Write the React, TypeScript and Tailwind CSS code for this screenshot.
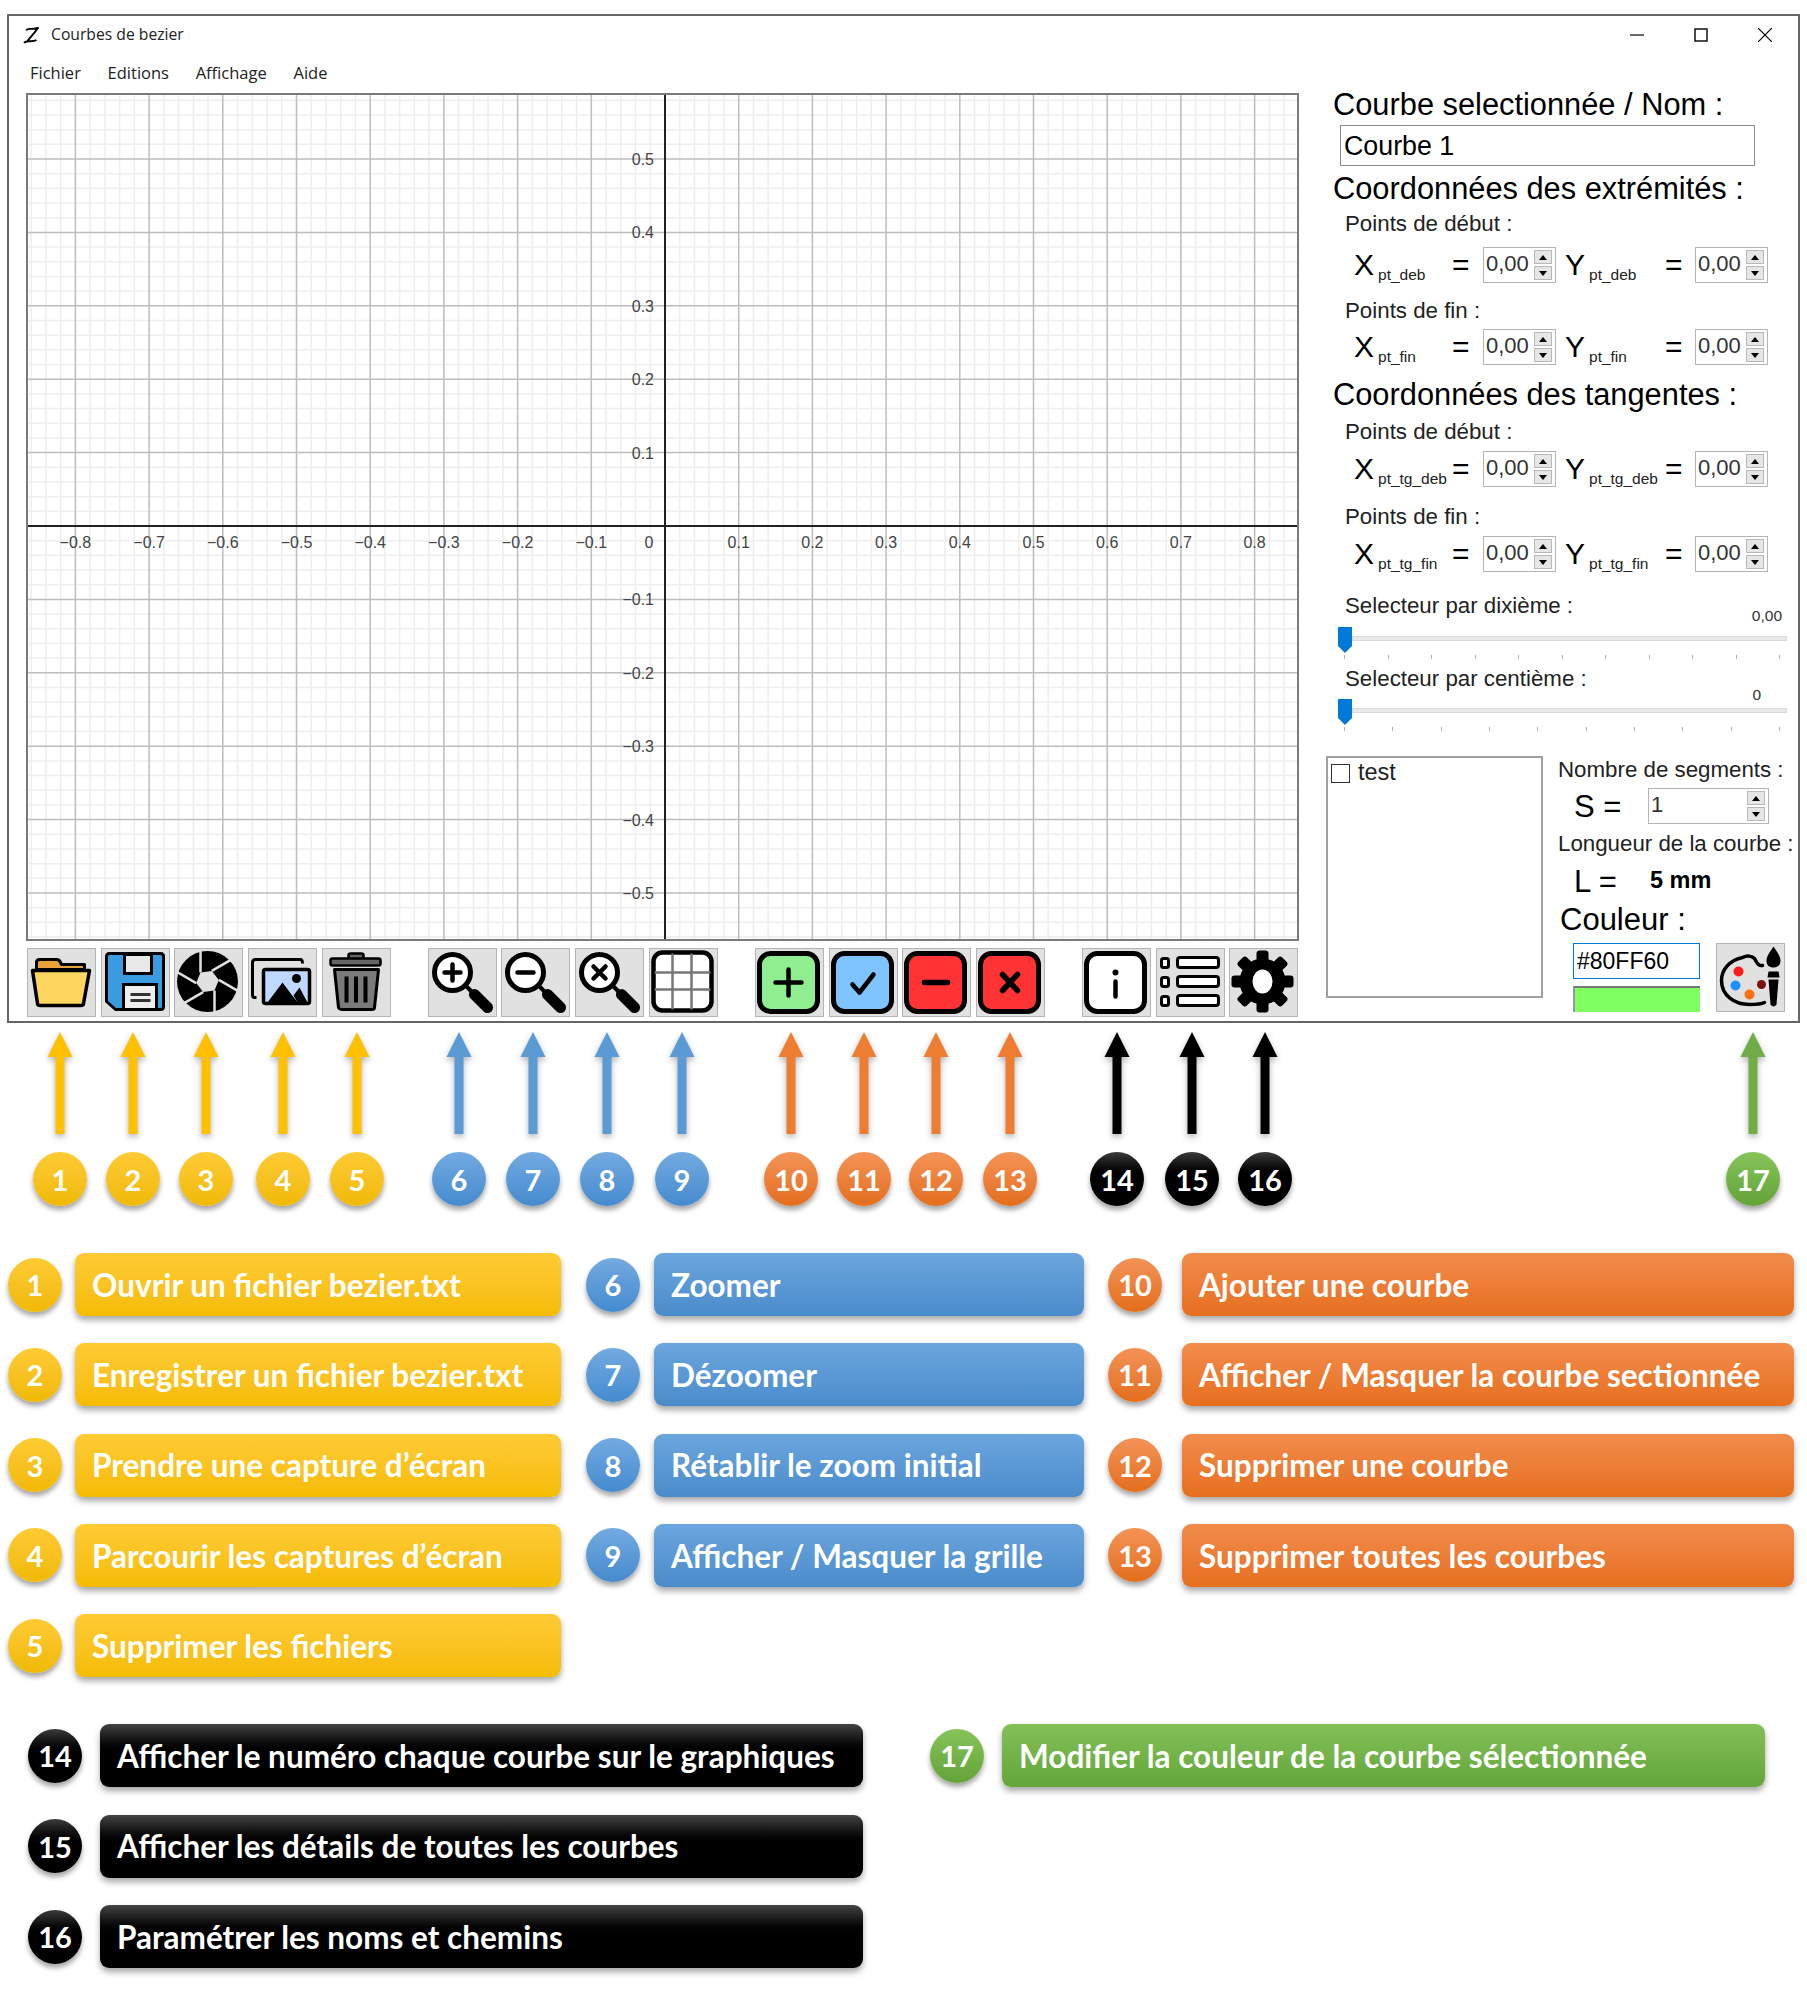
import React from "react";

const MAJOR_X = 73.7;
const MAJOR_Y = 73.4;
const AXIS_X = 637;
const AXIS_Y = 431;
const GRAPH_W = 1269;
const GRAPH_H = 844;

function range(from: number, to: number) {
  const out: number[] = [];
  for (let i = from; i <= to; i++) out.push(i);
  return out;
}

function Graph() {
  const xs = range(-50, 50).map((k) => ({ k, x: AXIS_X + (k * MAJOR_X) / 5 })).filter((p) => p.x > 0 && p.x < GRAPH_W);
  const ys = range(-35, 35).map((k) => ({ k, y: AXIS_Y + (k * MAJOR_Y) / 5 })).filter((p) => p.y > 0 && p.y < GRAPH_H);
  const fmt = (n: number) => (n < 0 ? "\u2212" : "") + "0." + Math.abs(n);
  return (
    <div className="w-[1273px] h-[848px] border-2 border-[#7a7a7a] bg-white">
      <svg width={GRAPH_W} height={GRAPH_H} className="block" fontFamily="'Liberation Sans', sans-serif">
        {xs.filter((p) => p.k % 5 !== 0).map((p) => (
          <line key={p.k} x1={p.x} x2={p.x} y1={0} y2={GRAPH_H} stroke="#eeeeee" strokeWidth="1.5" />
        ))}
        {ys.filter((p) => p.k % 5 !== 0).map((p) => (
          <line key={p.k} y1={p.y} y2={p.y} x1={0} x2={GRAPH_W} stroke="#eeeeee" strokeWidth="1.5" />
        ))}
        {xs.filter((p) => p.k % 5 === 0 && p.k !== 0).map((p) => (
          <line key={p.k} x1={p.x} x2={p.x} y1={0} y2={GRAPH_H} stroke="#bdbdbd" strokeWidth="1.5" />
        ))}
        {ys.filter((p) => p.k % 5 === 0 && p.k !== 0).map((p) => (
          <line key={p.k} y1={p.y} y2={p.y} x1={0} x2={GRAPH_W} stroke="#bdbdbd" strokeWidth="1.5" />
        ))}
        <line x1={AXIS_X} x2={AXIS_X} y1={0} y2={GRAPH_H} stroke="#222" strokeWidth="2" />
        <line y1={AXIS_Y} y2={AXIS_Y} x1={0} x2={GRAPH_W} stroke="#222" strokeWidth="2" />
        {range(-8, 8).filter((n) => n !== 0).map((n) => (
          <text key={n} x={AXIS_X + n * MAJOR_X} y={453} textAnchor="middle" fontSize="16" fill="#444">
            {fmt(n)}
          </text>
        ))}
        {range(-5, 5).filter((n) => n !== 0).map((n) => (
          <text key={n} x={626} y={AXIS_Y - n * MAJOR_Y + 6} textAnchor="end" fontSize="16" fill="#444">
            {fmt(n)}
          </text>
        ))}
        <text x={621} y={453} textAnchor="middle" fontSize="16" fill="#444">0</text>
      </svg>
    </div>
  );
}

function Btn({ children, className = "" }: { children: React.ReactNode; className?: string }) {
  return (
    <div className={"w-[69px] h-[69px] bg-[#e1e1e1] border-[1.5px] border-[#b4b4b4] shrink-0 " + className}>
      <svg viewBox="1.5 1.5 66 66" width="66" height="66" className="block">
        {children}
      </svg>
    </div>
  );
}

function Magnifier({ children }: { children: React.ReactNode }) {
  return (
    <>
      <circle cx="25" cy="25" r="18" fill="#fff" stroke="#000" strokeWidth="5" />
      <line x1="38" y1="38" x2="46" y2="46" stroke="#000" strokeWidth="4" />
      <line x1="47" y1="47" x2="60" y2="60" stroke="#000" strokeWidth="11" strokeLinecap="round" />
      {children}
    </>
  );
}

function SquareIcon({ fill, children }: { fill: string; children: React.ReactNode }) {
  return (
    <>
      <rect x="5" y="6" width="58" height="58" rx="11" fill={fill} stroke="#000" strokeWidth="5" />
      {children}
    </>
  );
}

function Folder() {
  return (
    <>
      <path d="M10 22 V15 Q10 12 13 12 H30 Q33 12 34 15 L35 17 H58 V22 Z" fill="#e8a33d" stroke="#000" strokeWidth="3" strokeLinejoin="round" />
      <path d="M6 23 H63 L57 56 Q57 58 54 58 H14 Q11 58 11 56 Z" fill="#fdd55f" stroke="#000" strokeWidth="3.5" strokeLinejoin="round" />
    </>
  );
}

function Floppy() {
  return (
    <>
      <path d="M9 6 H60 Q63 6 63 9 V59 Q63 62 60 62 H15 L6 54 V9 Q6 6 9 6 Z" fill="#3a9be0" stroke="#000" strokeWidth="3" strokeLinejoin="round" />
      <rect x="24" y="7" width="27" height="19" fill="#e8e8e8" stroke="#000" strokeWidth="3" />
      <rect x="23" y="37" width="33" height="25" fill="#eeeeee" stroke="#000" strokeWidth="3" />
      <line x1="30" y1="47" x2="50" y2="47" stroke="#333" strokeWidth="3" />
      <line x1="30" y1="53" x2="50" y2="53" stroke="#333" strokeWidth="3" />
    </>
  );
}

function Aperture() {
  return (
    <>
      <circle cx="34" cy="34" r="30.5" fill="#000" />
      <polygon points="27,25 38.3,23.4 45.3,32.4 41,43 29.7,44.6 22.7,35.6" fill="#e1e1e1" />
      {[0, 60, 120, 180, 240, 300].map((a) => (
        <line key={a} x1="27" y1="25" x2="27" y2="1" stroke="#e1e1e1" strokeWidth="2.5" transform={`rotate(${a} 34 34)`} />
      ))}
    </>
  );
}

function Gallery() {
  return (
    <>
      <path d="M9 50 H7 Q5 50 5 47 V15 Q5 12 8 12 H53 Q55 12 55 16" fill="none" stroke="#000" strokeWidth="3" />
      <rect x="16" y="22" width="46" height="34" rx="2" fill="#bfd8ff" stroke="#000" strokeWidth="3.5" />
      <polygon points="20,55 35,35 50,55" fill="#000" />
      <polygon points="46,48 52,40 60,55 50,55" fill="#000" />
      <circle cx="49" cy="31" r="4.5" fill="#000" />
    </>
  );
}

function Trash() {
  return (
    <>
      <path d="M27 11 V8 Q27 6 29 6 H40 Q42 6 42 8 V11" fill="#666" stroke="#000" strokeWidth="2.5" />
      <rect x="9" y="11" width="50" height="7" rx="2" fill="#666" stroke="#000" strokeWidth="2.5" />
      <path d="M13 22 H57 L53 60 Q53 62 50 62 H20 Q18 62 17 60 Z" fill="#7a7a7a" stroke="#000" strokeWidth="3" strokeLinejoin="round" />
      <rect x="23" y="29" width="4" height="26" fill="#000" />
      <rect x="32.5" y="29" width="4" height="26" fill="#000" />
      <rect x="42" y="29" width="4" height="26" fill="#000" />
    </>
  );
}

function ListIcon() {
  return (
    <>
      {[15, 34, 53].map((y) => (
        <g key={y}>
          <rect x="6" y={y - 4} width="7" height="9" rx="2" fill="#fff" stroke="#000" strokeWidth="3" />
          <rect x="22" y={y - 5} width="41" height="10" rx="2.5" fill="#fff" stroke="#000" strokeWidth="3" />
        </g>
      ))}
    </>
  );
}

function Gear() {
  return (
    <>
      {[0, 45, 90, 135, 180, 225, 270, 315].map((a) => (
        <rect key={a} x="28" y="3" width="12" height="14" rx="3" fill="#000" transform={`rotate(${a} 34 34)`} />
      ))}
      <circle cx="34" cy="34" r="23" fill="#000" />
      <ellipse cx="34" cy="34" rx="10" ry="12" fill="#fff" />
    </>
  );
}

function PaletteIcon() {
  return (
    <svg viewBox="1.5 1.5 66 66" width="66" height="66" className="block">
      <path d="M47 23 C42 24 41 19 39 16 C36 13 31 13 27 15 C13 18 6 28 6 38 C6 53 19 62 34 62 C40 62 45 62 49 60" fill="none" stroke="#000" strokeWidth="3.5" strokeLinecap="round" />
      <circle cx="23" cy="29" r="5" fill="#ff1a1a" />
      <circle cx="20" cy="43" r="5" fill="#1e90ff" />
      <circle cx="34" cy="52" r="5" fill="#ff7010" />
      <circle cx="46" cy="42" r="4.5" fill="#7a1010" />
      <path d="M58 4 C54 10 51 14 51 18 C51 23 54 25 58 25 C62 25 65 23 65 18 C65 14 62 10 58 4 Z" fill="#000" />
      <path d="M53 29 H63 L64 35 H52 Z" fill="#000" />
      <path d="M53 37 H63 L61 62 Q58 66 55 62 Z" fill="#000" />
    </svg>
  );
}

function Spinner({ value = "0,00", className = "w-[73px]" }: { value?: string; className?: string }) {
  return (
    <div className={"h-[36px] border-[1.5px] border-[#b4b4b4] bg-white flex items-center justify-between pr-[3px] pl-[2px] shrink-0 " + className}>
      <span className="text-[22px] text-[#333] leading-none -mt-[2px]">{value}</span>
      <div className="flex flex-col gap-[2px]">
        <div className="w-[18px] h-[14px] bg-[#e6e6e6] border border-[#b8b8b8] flex items-center justify-center">
          <svg width="8" height="5"><polygon points="0,5 4,0 8,5" fill="#000" /></svg>
        </div>
        <div className="w-[18px] h-[14px] bg-[#e6e6e6] border border-[#b8b8b8] flex items-center justify-center">
          <svg width="8" height="5"><polygon points="0,0 8,0 4,5" fill="#000" /></svg>
        </div>
      </div>
    </div>
  );
}

function CoordRow({ sub, subY }: { sub: string; subY: string }) {
  return (
    <div className="flex items-center h-[36px] pl-[21px]">
      <div className="w-[98px] flex items-baseline shrink-0">
        <span className="text-[30px] leading-none">X</span>
        <span className="text-[15.5px] leading-none ml-[4px] translate-y-[5px] text-[#222]">{sub}</span>
      </div>
      <span className="text-[30px] font-medium leading-none w-[31px] shrink-0">=</span>
      <Spinner />
      <div className="w-[100px] ml-[9px] flex items-baseline shrink-0">
        <span className="text-[30px] leading-none">Y</span>
        <span className="text-[15.5px] leading-none ml-[4px] translate-y-[5px] text-[#222]">{subY}</span>
      </div>
      <span className="text-[30px] font-medium leading-none w-[30px] shrink-0">=</span>
      <Spinner />
    </div>
  );
}

function Heading({ children, className = "" }: { children: React.ReactNode; className?: string }) {
  return <div className={"flex items-center text-[30.8px] leading-none whitespace-nowrap " + className}>{children}</div>;
}

function Label({ children, className = "" }: { children: React.ReactNode; className?: string }) {
  return <div className={"flex items-center pl-[12px] text-[22.3px] leading-none text-[#222] whitespace-nowrap " + className}>{children}</div>;
}

function Slider({ ticks }: { ticks: number }) {
  return (
    <div className="relative h-[36px] ml-[4px] w-[450px]">
      <div className="absolute left-[15px] right-0 top-[9px] h-[5px] bg-[#e7eae7] border border-[#d8dbd8]" />
      <svg width="16" height="26" className="absolute left-0 top-0">
        <polygon points="1,0 15,0 15,19 8,26 1,19" fill="#0078d7" />
      </svg>
      <div className="absolute left-[7px] w-[436px] top-[28px] flex justify-between">
        {range(1, ticks).map((t) => (
          <div key={t} className="w-px h-[4px] bg-[#b0b0b0]" />
        ))}
      </div>
    </div>
  );
}

function Panel() {
  return (
    <div className="flex flex-col pl-[34px] font-['Liberation_Sans',sans-serif] text-black">
      <Heading className="h-[24px]">Courbe selectionnée / Nom :</Heading>
      <div className="ml-[7px] mt-[8px] w-[415px] h-[41px] border-[1.5px] border-[#8c8c8c] flex items-center pl-[3px] pt-[2px] text-[26.8px] leading-none">Courbe 1</div>
      <Heading className="h-[36px] mt-[4px] pt-[2px]">Coordonnées des extrémités :</Heading>
      <Label className="h-[36px]">Points de début :</Label>
      <div className="mt-[5px]"><CoordRow sub="pt_deb" subY="pt_deb" /></div>
      <Label className="h-[36px] mt-[10px]">Points de fin :</Label>
      <CoordRow sub="pt_fin" subY="pt_fin" />
      <Heading className="h-[36px] mt-[12px] pt-[1px]">Coordonnées des tangentes :</Heading>
      <Label className="h-[38px]">Points de début :</Label>
      <CoordRow sub="pt_tg_deb" subY="pt_tg_deb" />
      <Label className="h-[38px] mt-[11px]">Points de fin :</Label>
      <CoordRow sub="pt_tg_fin" subY="pt_tg_fin" />

      <div className="mt-[18px] h-[37px] flex items-start justify-between w-[449px]">
        <Label className="h-[32px]">Selecteur par dixième :</Label>
        <span className="mt-[16px] h-[20px] text-[15.5px] leading-[20px] text-[#333]">0,00</span>
      </div>
      <Slider ticks={11} />
      <div className="h-[36px] flex items-start justify-between w-[449px]">
        <Label className="h-[32px]">Selecteur par centième :</Label>
        <span className="mt-[22px] h-[20px] mr-[21px] text-[15.5px] leading-[20px] text-[#333]">0</span>
      </div>
      <Slider ticks={10} />

      <div className="mt-[21px] -ml-[7px] flex items-start">
        <div className="w-[217px] h-[242px] border-2 border-[#a0a0a0] pl-[3px] pt-[4px] flex items-start gap-[8px] shrink-0">
          <div className="w-[19px] h-[19px] border-[1.5px] border-[#333] mt-[2px]" />
          <span className="text-[23.5px] leading-[20px] text-[#222]">test</span>
        </div>
        <div className="ml-[15px] flex flex-col whitespace-nowrap">
          <div className="h-[28px] flex items-center text-[22.3px] leading-none text-[#222]">Nombre de segments :</div>
          <div className="mt-[4px] flex items-center h-[36px] pl-[16px]">
            <span className="text-[31px] leading-none w-[74px]">S =</span>
            <Spinner value="1" className="w-[121px]" />
          </div>
          <div className="mt-[2px] h-[36px] flex items-center text-[22.3px] leading-none text-[#222]">Longueur de la courbe :</div>
          <div className="h-[38px] flex items-center pl-[16px]">
            <span className="text-[31px] leading-none w-[76px]">L =</span>
            <span className="text-[23.5px] font-bold leading-none">5 mm</span>
          </div>
          <div className="h-[38px] flex items-center pl-[2px] text-[31px] leading-none">Couleur :</div>
          <div className="mt-[5px] ml-[15px] flex items-start">
            <div className="w-[127px]">
              <div className="h-[36px] border-[1.5px] border-[#0078d7] flex items-center pl-[3px] text-[23px] leading-none">#80FF60</div>
              <div className="mt-[7px] h-[26px] bg-[#80ff60] border-t-2 border-l-2 border-t-[#777] border-l-[#999]" />
            </div>
            <div className="ml-[16px] w-[69px] h-[69px] bg-[#e1e1e1] border-[1.5px] border-[#b4b4b4]">
              <PaletteIcon />
            </div>
          </div>
        </div>
      </div>
    </div>
  );
}

function Toolbar() {
  return (
    <div className="flex mt-[7px] ml-px h-[69px]">
      <div className="flex gap-[4.7px]">
        <Btn><Folder /></Btn>
        <Btn><Floppy /></Btn>
        <Btn><Aperture /></Btn>
        <Btn><Gallery /></Btn>
        <Btn><Trash /></Btn>
      </div>
      <div className="flex gap-[4.7px] ml-[37px]">
        <Btn><Magnifier><path d="M25 17 V33 M17 25 H33" stroke="#000" strokeWidth="4.5" strokeLinecap="round" /></Magnifier></Btn>
        <Btn><Magnifier><path d="M17 25 H33" stroke="#000" strokeWidth="4.5" strokeLinecap="round" /></Magnifier></Btn>
        <Btn><Magnifier><path d="M19 19 L31 31 M31 19 L19 31" stroke="#000" strokeWidth="4.5" strokeLinecap="round" /></Magnifier></Btn>
        <Btn>
          <rect x="5" y="5" width="58" height="58" rx="9" fill="#fff" stroke="#000" strokeWidth="4.5" />
          <path d="M24 6 V62 M43 6 V62 M6 25 H62 M6 42 H62" stroke="#777" strokeWidth="2.5" />
        </Btn>
      </div>
      <div className="flex gap-[4.7px] ml-[37px]">
        <Btn><SquareIcon fill="#90ee90"><path d="M34 22 V48 M21 35 H47" stroke="#000" strokeWidth="4.5" strokeLinecap="round" /></SquareIcon></Btn>
        <Btn><SquareIcon fill="#80c4ff"><path d="M24 37 L31 45 L45 27" fill="none" stroke="#000" strokeWidth="4.5" strokeLinecap="round" strokeLinejoin="round" /></SquareIcon></Btn>
        <Btn><SquareIcon fill="#ff3333"><path d="M23 35 H46" stroke="#000" strokeWidth="5.5" strokeLinecap="round" /></SquareIcon></Btn>
        <Btn><SquareIcon fill="#ff3333"><path d="M27 27 L42 43 M42 27 L27 43" stroke="#000" strokeWidth="5.5" strokeLinecap="round" /></SquareIcon></Btn>
      </div>
      <div className="flex gap-[4.7px] ml-[37px]">
        <Btn>
          <SquareIcon fill="#fff">
            <circle cx="34" cy="25" r="3" fill="#000" />
            <path d="M34 34 V49" stroke="#000" strokeWidth="4.5" strokeLinecap="round" />
          </SquareIcon>
        </Btn>
        <Btn><ListIcon /></Btn>
        <Btn><Gear /></Btn>
      </div>
    </div>
  );
}

function AppWindow() {
  return (
    <div className="ml-[7px] mt-[14px] w-[1793px] h-[1009px] border-2 border-[#666] bg-white flex flex-col">
      <div className="h-[38px] flex items-center pl-[14px] shrink-0 font-['Open_Sans',sans-serif] text-[15.7px] text-[#222]">
        <svg width="18" height="18" viewBox="0 0 16 16" className="mr-[10px]">
          <path d="M3 4 C4 1 8 4 14 1.5 M13 2 C10 7 7 9 3.5 14 M1 15 C3 12 8 15 12 12.5" fill="none" stroke="#000" strokeWidth="1.7" />
        </svg>
        <span>Courbes de bezier</span>
        <div className="ml-auto flex items-center gap-[50px] pr-[26px]">
          <svg width="14" height="14"><line x1="0" y1="7" x2="14" y2="7" stroke="#000" strokeWidth="1.2" /></svg>
          <svg width="14" height="14"><rect x="1" y="1" width="12" height="12" fill="none" stroke="#000" strokeWidth="1.4" /></svg>
          <svg width="14" height="14"><path d="M0 0 L14 14 M14 0 L0 14" stroke="#000" strokeWidth="1.2" /></svg>
        </div>
      </div>
      <div className="h-[39px] flex items-center pl-[21px] gap-[26.7px] shrink-0 font-['Open_Sans',sans-serif] text-[16.5px] text-[#222]">
        <span>Fichier</span>
        <span>Editions</span>
        <span>Affichage</span>
        <span>Aide</span>
      </div>
      <div className="flex pl-[17px]">
        <div className="flex flex-col shrink-0">
          <Graph />
          <Toolbar />
        </div>
        <Panel />
      </div>
    </div>
  );
}

function Arrow({ fill }: { fill: string }) {
  return (
    <svg width="34" height="110" viewBox="0 0 34 110" className="block drop-shadow-[0_3px_3px_rgba(0,0,0,0.3)]">
      <polygon points="17,0 29.5,25 21.5,25 21.5,102 12.5,102 12.5,25 4.5,25" fill={fill} />
    </svg>
  );
}

const themes = {
  yellow: { arrow: "#ffc000", grad: "from-[#ffcb33] to-[#f0b900]", bar: "from-[#ffcb33] to-[#f5bc00]" },
  blue: { arrow: "#5b9bd5", grad: "from-[#73aae0] to-[#448bcf]", bar: "from-[#6ba6de] to-[#4a8ccb]" },
  orange: { arrow: "#ed7d31", grad: "from-[#f39356] to-[#e46e19]", bar: "from-[#f28c4b] to-[#e66f1c]" },
  black: { arrow: "#000000", grad: "from-[#3c3c3c] via-[#000] to-[#000]", bar: "from-[#444] via-[#000] to-[#000]" },
  green: { arrow: "#70ad47", grad: "from-[#86c45a] to-[#63a338]", bar: "from-[#82c057] to-[#64a63a]" },
};

type Theme = keyof typeof themes;

function NumDot({ n, theme }: { n: number; theme: Theme }) {
  return (
    <div className={"w-[54px] h-[54px] rounded-full bg-linear-to-b shadow-[0_4px_5px_rgba(0,0,0,0.35)] flex items-center justify-center text-white text-[29px] font-bold leading-none shrink-0 " + themes[theme].grad}>
      {n}
    </div>
  );
}

const callouts: { n: number; theme: Theme; ml: string }[] = [
  { n: 1, theme: "yellow", ml: "ml-[33px]" },
  { n: 2, theme: "yellow", ml: "ml-[19px]" },
  { n: 3, theme: "yellow", ml: "ml-[19px]" },
  { n: 4, theme: "yellow", ml: "ml-[23px]" },
  { n: 5, theme: "yellow", ml: "ml-[20px]" },
  { n: 6, theme: "blue", ml: "ml-[48px]" },
  { n: 7, theme: "blue", ml: "ml-[20px]" },
  { n: 8, theme: "blue", ml: "ml-[20px]" },
  { n: 9, theme: "blue", ml: "ml-[21px]" },
  { n: 10, theme: "orange", ml: "ml-[55px]" },
  { n: 11, theme: "orange", ml: "ml-[19px]" },
  { n: 12, theme: "orange", ml: "ml-[18px]" },
  { n: 13, theme: "orange", ml: "ml-[20px]" },
  { n: 14, theme: "black", ml: "ml-[53px]" },
  { n: 15, theme: "black", ml: "ml-[21px]" },
  { n: 16, theme: "black", ml: "ml-[19px]" },
  { n: 17, theme: "green", ml: "ml-[434px]" },
];

function Callouts() {
  return (
    <div className="flex mt-[9px] font-['Lato',sans-serif]">
      {callouts.map((c) => (
        <div key={c.n} className={"w-[54px] flex flex-col items-center shrink-0 " + c.ml}>
          <Arrow fill={themes[c.theme].arrow} />
          <div className="mt-[10px]">
            <NumDot n={c.n} theme={c.theme} />
          </div>
        </div>
      ))}
    </div>
  );
}

function LegendItem({ n, theme, text, barW }: { n: number; theme: Theme; text: string; barW: string }) {
  return (
    <div className="flex items-center h-[63px]">
      <NumDot n={n} theme={theme} />
      <div className={"h-[63px] ml-auto rounded-[9px] bg-linear-to-b shadow-[0_4px_6px_rgba(0,0,0,0.35)] flex items-center pl-[17px] pr-[10px] pt-[2px] text-white text-[31.5px] font-bold leading-none whitespace-nowrap " + barW + " " + themes[theme].bar}>
        {text}
      </div>
    </div>
  );
}

function Legend() {
  return (
    <div className="font-['Lato',sans-serif]">
      <div className="flex mt-[47px] pl-[8px]">
        <div className="w-[553px] flex flex-col gap-[27.3px]">
          <LegendItem n={1} theme="yellow" barW="w-[486px]" text="Ouvrir un fichier bezier.txt" />
          <LegendItem n={2} theme="yellow" barW="w-[486px]" text="Enregistrer un fichier bezier.txt" />
          <LegendItem n={3} theme="yellow" barW="w-[486px]" text="Prendre une capture d’écran" />
          <LegendItem n={4} theme="yellow" barW="w-[486px]" text="Parcourir les captures d’écran" />
          <LegendItem n={5} theme="yellow" barW="w-[486px]" text="Supprimer les fichiers" />
        </div>
        <div className="w-[498px] ml-[25px] flex flex-col gap-[27.3px]">
          <LegendItem n={6} theme="blue" barW="w-[430px]" text="Zoomer" />
          <LegendItem n={7} theme="blue" barW="w-[430px]" text="Dézoomer" />
          <LegendItem n={8} theme="blue" barW="w-[430px]" text="Rétablir le zoom initial" />
          <LegendItem n={9} theme="blue" barW="w-[430px]" text="Afficher / Masquer la grille" />
        </div>
        <div className="w-[686px] ml-[24px] flex flex-col gap-[27.3px]">
          <LegendItem n={10} theme="orange" barW="w-[612px]" text="Ajouter une courbe" />
          <LegendItem n={11} theme="orange" barW="w-[612px]" text="Afficher / Masquer la courbe sectionnée" />
          <LegendItem n={12} theme="orange" barW="w-[612px]" text="Supprimer une courbe" />
          <LegendItem n={13} theme="orange" barW="w-[612px]" text="Supprimer toutes les courbes" />
        </div>
      </div>
      <div className="flex mt-[47px] pl-[28px]">
        <div className="w-[835px] flex flex-col gap-[27.5px]">
          <LegendItem n={14} theme="black" barW="w-[763px]" text="Afficher le numéro chaque courbe sur le graphiques" />
          <LegendItem n={15} theme="black" barW="w-[763px]" text="Afficher les détails de toutes les courbes" />
          <LegendItem n={16} theme="black" barW="w-[763px]" text="Paramétrer les noms et chemins" />
        </div>
        <div className="w-[835px] ml-[67px]">
          <LegendItem n={17} theme="green" barW="w-[763px]" text="Modifier la couleur de la courbe sélectionnée" />
        </div>
      </div>
    </div>
  );
}

export default function App() {
  return (
    <div className="w-[1807px] h-[2000px] bg-white overflow-hidden flow-root">
      <AppWindow />
      <Callouts />
      <Legend />
    </div>
  );
}
